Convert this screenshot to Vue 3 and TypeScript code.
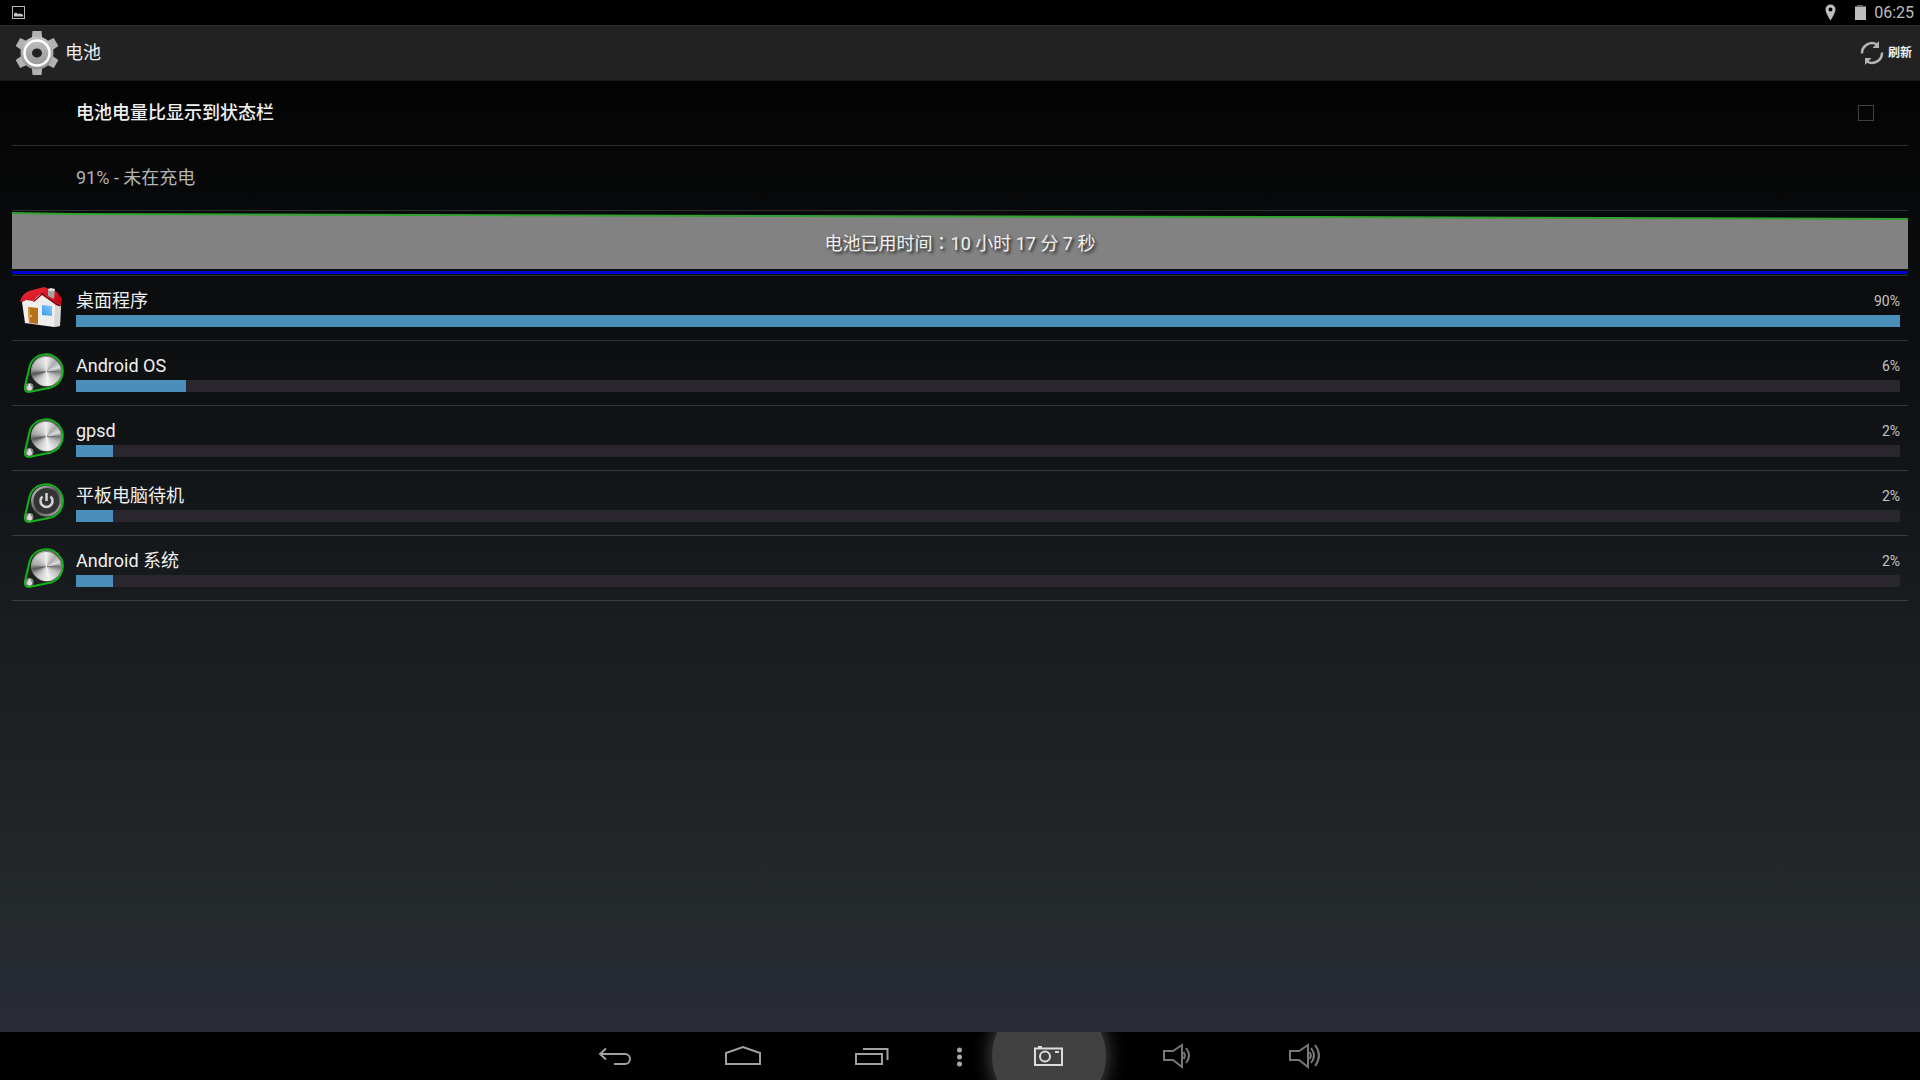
<script setup lang="ts">
import { ref } from 'vue'

interface Usage {
  name: string
  percent: number
  width: number
  icon: 'house' | 'metal' | 'power'
}

const showPercent = ref(false)

const usages: Usage[] = [
  { name: '桌面程序', percent: 90, width: 100, icon: 'house' },
  { name: 'Android OS', percent: 6, width: 6.05, icon: 'metal' },
  { name: 'gpsd', percent: 2, width: 2.03, icon: 'metal' },
  { name: '平板电脑待机', percent: 2, width: 2.03, icon: 'power' },
  { name: 'Android 系统', percent: 2, width: 2.03, icon: 'metal' },
]
</script>

<template>
  <div class="screen">
    <svg class="defs" width="0" height="0" aria-hidden="true">
      <defs>
        <linearGradient id="gearFill" x1="0" y1="0" x2="0" y2="1">
          <stop offset="0" stop-color="#c4c4c4" />
          <stop offset="1" stop-color="#929292" />
        </linearGradient>
        <linearGradient id="roof" x1="0" y1="0" x2="1" y2="1">
          <stop offset="0" stop-color="#f0303a" />
          <stop offset="1" stop-color="#c0000c" />
        </linearGradient>
        <linearGradient id="pane" x1="0" y1="1" x2="1" y2="0">
          <stop offset="0" stop-color="#2f9cf0" />
          <stop offset="1" stop-color="#8cc8f8" />
        </linearGradient>
        <linearGradient id="rim" x1="0" y1="0" x2="1" y2="1">
          <stop offset="0" stop-color="#d0d0d0" />
          <stop offset="0.5" stop-color="#555" />
          <stop offset="1" stop-color="#bbb" />
        </linearGradient>
      </defs>
    </svg>

    <header class="status">
      <svg width="13" height="13" viewBox="0 0 13 13" aria-hidden="true">
        <rect x="0.5" y="0.5" width="12" height="12" fill="none" stroke="#b8b8b8" />
        <path d="M2 10.500V7.500L4 6.500 6 8 8 7.500 11 8.500V10.500Z" fill="#c4c4c4" />
      </svg>
      <div class="status-right">
        <svg class="pin" width="11" height="17" viewBox="0 0 11 17" aria-hidden="true">
          <path fill="#bebebe" fill-rule="evenodd" d="M5.500 0.500A5 5 0 0 0 .500 5.500C.500 9 5.500 16.500 5.500 16.500S10.500 9 10.500 5.500A5 5 0 0 0 5.500.500ZM5.500 3.500A2 2 0 1 1 5.500 7.500 2 2 0 1 1 5.500 3.500Z" />
        </svg>
        <svg width="12" height="16" viewBox="0 0 12 16" aria-hidden="true">
          <path fill="#666" d="M3 0H9V1H12V2H1V1H3Z" />
          <path fill="#bebebe" d="M1 2H12V15H1Z" />
        </svg>
        <time>06:25</time>
      </div>
    </header>

    <div class="actionbar">
      <svg width="46" height="46" viewBox="-23 -23 46 46" aria-hidden="true">
        <g fill="url(#gearFill)">
          <path v-for="a in [0, 60, 120, 180, 240, 300]" :key="a" :transform="`rotate(${a})`" d="M-5.500 -12L-4.500 -22H4.500L5.500 -12Z" fill="#b2b2b2" />
          <path fill-rule="evenodd" d="M0 -16.500A16.500 16.500 0 1 1 0 16.500 16.500 16.500 0 1 1 0 -16.500ZM0 -4.500A5 4.500 0 1 0 0 4.500 5 4.500 0 1 0 0 -4.500Z" />
        </g>
        <circle r="12.500" fill="none" stroke="#fff" stroke-width="2.500" />
      </svg>
      <h1>电池</h1>
      <button class="refresh" type="button">
        <svg width="24" height="24" viewBox="0 0 24 24" aria-hidden="true">
          <g fill="none" stroke="#b4b4b4" stroke-width="2.500">
            <path d="M2 12.500A10 10 0 0 1 17 3.500" />
            <path d="M22 11.500A10 10 0 0 1 7 20.500" />
          </g>
          <path fill="#b4b4b4" d="M19 0V7H12.500ZM5 24V17H11.500Z" />
        </svg>
        <span>刷新</span>
      </button>
    </div>

    <main>
      <div class="row option">
        <label for="show-percent">电池电量比显示到状态栏</label>
        <input id="show-percent" v-model="showPercent" type="checkbox" />
      </div>
      <div class="row level">91% - 未在充电</div>
      <div class="row chart">
        <svg class="history" viewBox="0 0 1896 58" preserveAspectRatio="none" aria-hidden="true">
          <path fill="#828282" d="M0 2L60 3 770 5 1300 6 1896 8V58H0Z" />
          <path class="curve" d="M0 2L60 3 770 5 1300 6 1896 8" />
        </svg>
        <div class="charge"></div>
        <p>电池已用时间<span class="colon">：</span>10 小时 17 分 7 秒</p>
      </div>
      <div v-for="u in usages" :key="u.name" class="row usage">
        <svg width="48" height="48" viewBox="0 0 48 48" aria-hidden="true">
          <g v-if="u.icon === 'house'">
            <path fill="#f1efed" d="M2 18L18 9 30 12 41 20 40 42 34 43 5 39Z" />
            <path fill="#c8c8c8" d="M35 21L41 20 40 42 34 43Z" opacity="0.600" />
            <path fill="url(#roof)" d="M0 17Q3 9 9 7L24 3 37 8 42 15 41 21 37 19 22 9Q17 12 13 17L6 16 1 18Z" />
            <path fill="#8a0010" d="M22 9L37 19 41 21 40 22.500 36 21 22 11 14 18 13 17Z" />
            <path fill="#a4a4a4" d="M28 5L35 5 34 15 28 12Z" />
            <path fill="#dedede" d="M28 5L31 4 35 5 34 7 29 7Z" />
            <path fill="#b8701c" d="M8 23L18 24V40L9 39Z" />
            <path fill="#d89038" d="M8 23L10 24V39H9Z" />
            <circle cx="11" cy="32" r="1" fill="#f4dc90" />
            <path fill="url(#pane)" d="M22 21L32 22V32L22 31Z" />
          </g>
          <g v-else>
            <path fill="#1c221c" stroke="#12b41a" stroke-width="2" stroke-linejoin="round" d="M10 16A17 17 0 1 1 31 38.500L9 43Q4 43 5 37Z" />
            <circle cx="26.500" cy="22" r="15.500" fill="url(#rim)" />
            <foreignObject v-if="u.icon === 'metal'" x="12" y="8" width="29" height="29"><div class="disc"></div></foreignObject>
            <g v-else>
              <circle cx="26.500" cy="22" r="13" fill="#343434" />
              <path fill="none" stroke="#d4d4d4" stroke-width="2.500" d="M22.500 17.500A6 6 0 1 0 30.500 17.500M26.500 14V22" />
            </g>
            <circle cx="9.500" cy="38" r="4" fill="#888" />
            <circle cx="9.500" cy="39" r="2.500" fill="#ddd" />
            <circle cx="9.500" cy="36" r="1" fill="#fff" />
          </g>
        </svg>
        <div class="details">
          <div class="caption">
            <span>{{ u.name }}</span>
            <span class="percent">{{ u.percent }}%</span>
          </div>
          <div class="track"><div class="fill" :style="{ width: u.width + '%' }"></div></div>
        </div>
      </div>
    </main>

    <nav>
      <button type="button" aria-label="返回">
        <svg width="36" height="24" viewBox="0 0 36 24">
          <path d="M2 10H27A4.500 4.500 0 0 1 27 20H16M8 4.500L2 10 8 15.500" />
        </svg>
      </button>
      <button type="button" aria-label="主页">
        <svg width="36" height="24" viewBox="0 0 36 24">
          <path d="M0 20V9L17 3 34 9V20Z" />
        </svg>
      </button>
      <button type="button" aria-label="最近">
        <svg width="36" height="24" viewBox="0 0 36 24">
          <path d="M2 10H28V20H2ZM9 5H33.500V16" />
        </svg>
      </button>
      <button class="more" type="button" aria-label="菜单">
        <svg width="6" height="24" viewBox="0 0 6 24">
          <g fill="#a8a8a8" stroke="none"><circle cx="2.500" cy="6" r="2.500" /><circle cx="2.500" cy="13" r="2.500" /><circle cx="2.500" cy="20" r="2.500" /></g>
        </svg>
      </button>
      <button class="camera" type="button" aria-label="截屏">
        <svg width="30" height="24" viewBox="0 0 30 24">
          <path d="M2 4.500H29V21H2ZM5 3H9" />
          <circle cx="12" cy="12.500" r="5" />
          <path d="M22 8H26" />
        </svg>
      </button>
      <button class="volume" type="button" aria-label="音量减">
        <svg width="32" height="26" viewBox="0 0 32 26">
          <path d="M4 8H13L22 2V24L13 17H4Z" />
          <path d="M23.500 9Q26 12.500 23.500 16M26 5Q32 12.500 26 20" />
        </svg>
      </button>
      <button class="volume" type="button" aria-label="音量加">
        <svg width="32" height="26" viewBox="0 0 32 26">
          <path d="M2 8H11L20 2V24L11 17H2Z" />
          <path d="M21.500 9Q24 12.500 21.500 16M23 5Q29 12.500 23 20M27 2Q35 12.500 27 23" />
        </svg>
      </button>
    </nav>
  </div>
</template>

<style>
body {
  margin: 0;
  background: #000;
}
</style>

<style scoped>
.screen {
  display: flex;
  flex-direction: column;
  min-height: 100vh;
  box-sizing: border-box;
  color: #f0f0f0;
  font: 400 18px/24px Roboto, "Noto Sans CJK SC", sans-serif;
  background: linear-gradient(#000, #0f1113 37%, #181c1e 56%, #1e2224 71%, #24292b 84%, #262a32 90%, #2b2e37);
}

.defs {
  position: absolute;
}

button {
  margin: 0;
  padding: 0;
  border: 0;
  background: none;
  color: inherit;
  font: inherit;
}

.status {
  display: flex;
  align-items: center;
  justify-content: space-between;
  height: 25px;
  padding: 0 6px 0 12px;
  background: #000;
}

.status-right {
  display: flex;
  align-items: center;
  gap: 8px;
  color: #bebebe;
  font-size: 16px;
}

.pin {
  margin-right: 10px;
}

.actionbar {
  display: flex;
  align-items: center;
  height: 56px;
  box-sizing: border-box;
  padding: 0 8px 0 14px;
  background: #222;
  border-top: 1px solid #2c2c2c;
  border-bottom: 1px solid #191919;
}

h1 {
  flex: 1;
  margin: 0 0 0 5px;
  font-size: 18px;
  font-weight: 400;
}

.refresh {
  display: flex;
  align-items: center;
  gap: 4px;
  font-size: 12px;
  font-weight: 700;
}

main {
  flex: 1;
  padding: 0 12px;
}

.row {
  display: flex;
  align-items: center;
  height: 64px;
  border-bottom: 1px solid #ffffff28;
}

.option {
  justify-content: space-between;
  padding: 0 34px 0 64px;
  font-weight: 500;
}

.option input {
  appearance: none;
  width: 16px;
  height: 16px;
  margin: 0;
  border: 1px solid #404040;
}

.option input:checked {
  background: #33b5e5;
}

.level {
  padding-left: 64px;
  color: #b4b4b4;
}

.chart {
  position: relative;
  flex-direction: column;
  align-items: stretch;
}

.history {
  display: block;
  width: 100%;
  height: 58px;
}

.curve {
  fill: none;
  stroke: #30a030;
  stroke-width: 2px;
  vector-effect: non-scaling-stroke;
}

.charge {
  height: 3px;
  margin-top: 2px;
  background: #0000cc;
}

.chart p {
  position: absolute;
  inset: 19px 0 auto;
  margin: 0;
  text-align: center;
  text-shadow: 2px 2px 3px #222;
}

.colon {
  font-family: "Noto Sans CJK TC", sans-serif;
}

.usage {
  padding: 0 8px;
  gap: 8px;
}

.details {
  flex: 1;
}

.caption {
  display: flex;
  justify-content: space-between;
  margin-bottom: 2px;
}

.percent {
  color: #c4c4c4;
  font-size: 14px;
}

.track {
  height: 12px;
  background: #29262d;
}

.fill {
  height: 100%;
  background: #498fba;
}

.disc {
  width: 29px;
  height: 29px;
  border-radius: 50%;
  background: conic-gradient(#eee, #aaa 12%, #ddd 20%, #777 25%, #bbb 32%, #f4f4f4 48%, #ccc 60%, #aaa 66%, #555 72%, #aaa 78%, #ccc 88%, #eee);
}

nav {
  display: flex;
  justify-content: center;
  height: 48px;
  overflow: hidden;
  background: #000;
}

nav button {
  display: flex;
  align-items: center;
  justify-content: center;
  width: 128px;
}

nav svg {
  position: relative;
  overflow: visible;
  fill: none;
  stroke: #a0a0a0;
  stroke-width: 2px;
}

nav .more {
  width: 48px;
}

.camera {
  position: relative;
}

.camera::before {
  content: "";
  position: absolute;
  inset: -33px 6px -33px 8px;
  border-radius: 50%;
  background: #414141;
  box-shadow: 0 0 20px #555;
}

.camera svg {
  stroke: #dcdcdc;
}

.volume svg {
  stroke: #777;
}
</style>
